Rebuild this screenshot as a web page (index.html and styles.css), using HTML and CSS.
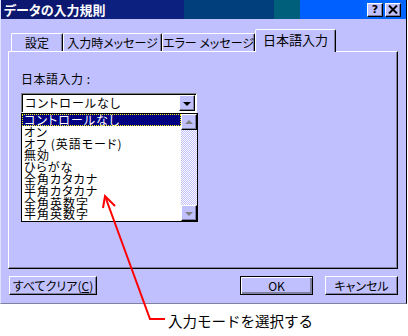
FILE: index.html
```html
<!DOCTYPE html>
<html>
<head>
  <meta charset="UTF-8">
  <title>データの入力規則</title>
  <link rel="stylesheet" href="styles.css">
</head>
<body>
  <div class="page">
    <div class="dialog">
      <div class="titlebar">
        <span class="title">データの入力規則</span>
        <div class="caption-btns">
          <span class="cbtn">?</span>
          <span class="cbtn">
            <svg width="10" height="9" viewBox="0 0 10 9"><path d="M1 0.5 L9 8.5 M9 0.5 L1 8.5" stroke="#000" stroke-width="2"/></svg>
          </span>
        </div>
      </div>

      <div class="tabs">
        <div class="tab tab-1">設定</div>
        <div class="tab tab-2">入力時メッセージ</div>
        <div class="tab tab-3">エラー メッセージ</div>
        <div class="tab tab-4 active">日本語入力</div>
      </div>

      <div class="panel">
        <div class="field-label">日本語入力 :</div>
        <div class="combo">
          <span class="combo-text">コントロールなし</span>
          <span class="drop-btn"><i class="tri-down"></i></span>
        </div>
        <div class="listbox">
          <ul class="items">
            <li class="selected">コントロールなし</li>
            <li>オン</li>
            <li>オフ (英語モード)</li>
            <li>無効</li>
            <li>ひらがな</li>
            <li>全角カタカナ</li>
            <li>半角カタカナ</li>
            <li>全角英数字</li>
            <li>半角英数字</li>
          </ul>
          <div class="scrollbar">
            <span class="sbtn"><i class="tri-up grey"></i></span>
            <span class="track"></span>
            <span class="sbtn"><i class="tri-down grey"></i></span>
          </div>
        </div>
      </div>

      <div class="buttons">
        <button class="btn btn-clear">すべてクリア(<u>C</u>)</button>
        <span class="spacer"></span>
        <button class="btn btn-default">OK</button>
        <button class="btn">キャンセル</button>
      </div>
    </div>

    <div class="note">入力モードを選択する</div>

    <svg class="arrow" width="408" height="336" viewBox="0 0 408 336">
      <polyline points="105,196 150,319 165,319" fill="none" stroke="#ff0000" stroke-width="2"/>
      <polyline points="103,208 105,196 115,206" fill="none" stroke="#ff0000" stroke-width="2"/>
    </svg>
  </div>
</body>
</html>
```

FILE: styles.css
```css
body {
  margin: 0;
  background: #fff;
  font-family: "Noto Sans CJK JP", "DejaVu Sans", sans-serif;
  font-size: 12px;
  font-feature-settings: "palt";
  color: #000;
}
.page {
  position: relative;
  width: 408px;
  height: 336px;
  overflow: hidden;
}
.dialog {
  box-sizing: border-box;
  width: 407px;
  height: 304px;
  background: #c0c0ff;
  border-left: 1px solid #e0e0ff;
  border-right: 1px solid #000;
  border-bottom: 1px solid #8080a0;
  display: flex;
  flex-direction: column;
}
.titlebar {
  height: 19px;
  display: flex;
  align-items: center;
  justify-content: space-between;
  padding: 0 5px 0 3px;
  background: linear-gradient(to right,
    #0c1870 0, #0c1870 93px,
    #0c2080 93px, #0c2080 183px,
    #003e7c 183px, #003e7c 273px,
    #00607c 273px, #00607c 299px,
    #0060ff 299px, #0060ff 363px,
    #0066ff 363px);
}
.title {
  color: #fff;
  font-weight: bold;
  font-size: 13px;
  line-height: 15px;
  white-space: nowrap;
}
.caption-btns {
  display: flex;
  gap: 2px;
}
.cbtn {
  box-sizing: border-box;
  width: 16px;
  height: 14px;
  background: #c0c0ff;
  border: 1px solid;
  border-color: #fff #000 #000 #fff;
  box-shadow: inset -1px -1px #8080a0;
  display: flex;
  align-items: center;
  justify-content: center;
  font-family: "DejaVu Sans", sans-serif;
  font-weight: bold;
  font-size: 11px;
  line-height: 12px;
}
.tabs {
  display: flex;
  align-items: flex-end;
  padding: 10px 0 0 10px;
  height: 22px;
  position: relative;
  z-index: 1;
}
.tab {
  box-sizing: border-box;
  height: 18px;
  border: 1px solid;
  border-bottom: none;
  border-color: #fff #000 transparent #fff;
  border-radius: 2px 2px 0 0;
  box-shadow: inset -1px 0 #8080a0;
  text-align: center;
  line-height: 17px;
  font-size: 12px;
  white-space: nowrap;
}
.tab-1 { width: 52px; }
.tab-2 { width: 99px; }
.tab-3 { width: 93px; }
.tab-4 { width: 81px; }
.tab.active {
  height: 23px;
  margin-bottom: -1px;
  background: #c0c0ff;
  line-height: 20px;
  font-size: 13px;
}
.panel {
  box-sizing: border-box;
  margin: 0 8px 0 7px;
  height: 218px;
  border: 1px solid;
  border-color: #fff #000 #000 #fff;
  box-shadow: inset -1px -1px #8080a0;
  padding: 20px 0 0 12px;
}
.field-label {
  line-height: 14px;
  height: 14px;
  letter-spacing: 0.5px;
}
.combo {
  box-sizing: border-box;
  margin-top: 7px;
  width: 176px;
  height: 20px;
  background: #fff;
  border: 1px solid;
  border-color: #808080 #fff #fff #808080;
  box-shadow: inset 1px 1px #000;
  display: flex;
  align-items: center;
  justify-content: space-between;
  padding: 1px 1px 1px 3px;
}
.combo-text {
  line-height: 16px;
  letter-spacing: 1px;
}
.drop-btn,
.sbtn {
  box-sizing: border-box;
  width: 16px;
  height: 16px;
  background: #c0c0ff;
  border: 1px solid;
  border-color: #fff #000 #000 #fff;
  box-shadow: inset -1px -1px #8080a0;
  display: flex;
  align-items: center;
  justify-content: center;
}
.tri-down {
  width: 0;
  height: 0;
  border-left: 4px solid transparent;
  border-right: 4px solid transparent;
  border-top: 4px solid #000;
  margin-top: 1px;
}
.tri-up {
  width: 0;
  height: 0;
  border-left: 4px solid transparent;
  border-right: 4px solid transparent;
  border-bottom: 4px solid #000;
}
.tri-up.grey { border-bottom-color: #808080; }
.tri-down.grey { border-top-color: #808080; }
.listbox {
  box-sizing: border-box;
  width: 177px;
  height: 109px;
  background: #fff;
  border: 1px solid #000;
  display: flex;
}
.items {
  list-style: none;
  margin: 0;
  padding: 0;
  flex: 1;
}
.items li {
  height: 11.8px;
  line-height: 11.8px;
  padding-left: 2px;
  letter-spacing: 1px;
  white-space: nowrap;
}
.items li.selected {
  background: #000080;
  color: #fff;
  outline: 1px dotted #ffff00;
  outline-offset: -1px;
}
.scrollbar {
  width: 16px;
  display: flex;
  flex-direction: column;
}
.track {
  flex: 1;
  background: repeating-conic-gradient(#fff 0 25%, #c0c0ff 0 50%) 0 0 / 2px 2px;
}
.buttons {
  display: flex;
  padding: 7px 8px 0 8px;
  gap: 12px;
}
.spacer {
  flex: 1;
}
.btn {
  box-sizing: border-box;
  height: 19px;
  width: 73px;
  padding: 0;
  background: #c0c0ff;
  border: 1px solid;
  border-color: #fff #000 #000 #fff;
  box-shadow: inset -1px -1px #8080a0;
  font-family: "Noto Sans CJK JP", "DejaVu Sans", sans-serif;
  font-size: 12px;
  font-feature-settings: "palt";
  line-height: 15px;
  color: #000;
  white-space: nowrap;
}
.btn-clear {
  width: 88px;
}
.btn-default {
  border: 1px solid #000;
  box-shadow: inset 1px 1px #fff, inset -2px -2px #8080a0;
}
.note {
  margin-top: 8px;
  padding-left: 168px;
  font-size: 14.5px;
  line-height: 17px;
  font-feature-settings: normal;
  white-space: nowrap;
}
.arrow {
  position: absolute;
  left: 0;
  top: 0;
  pointer-events: none;
}
```
